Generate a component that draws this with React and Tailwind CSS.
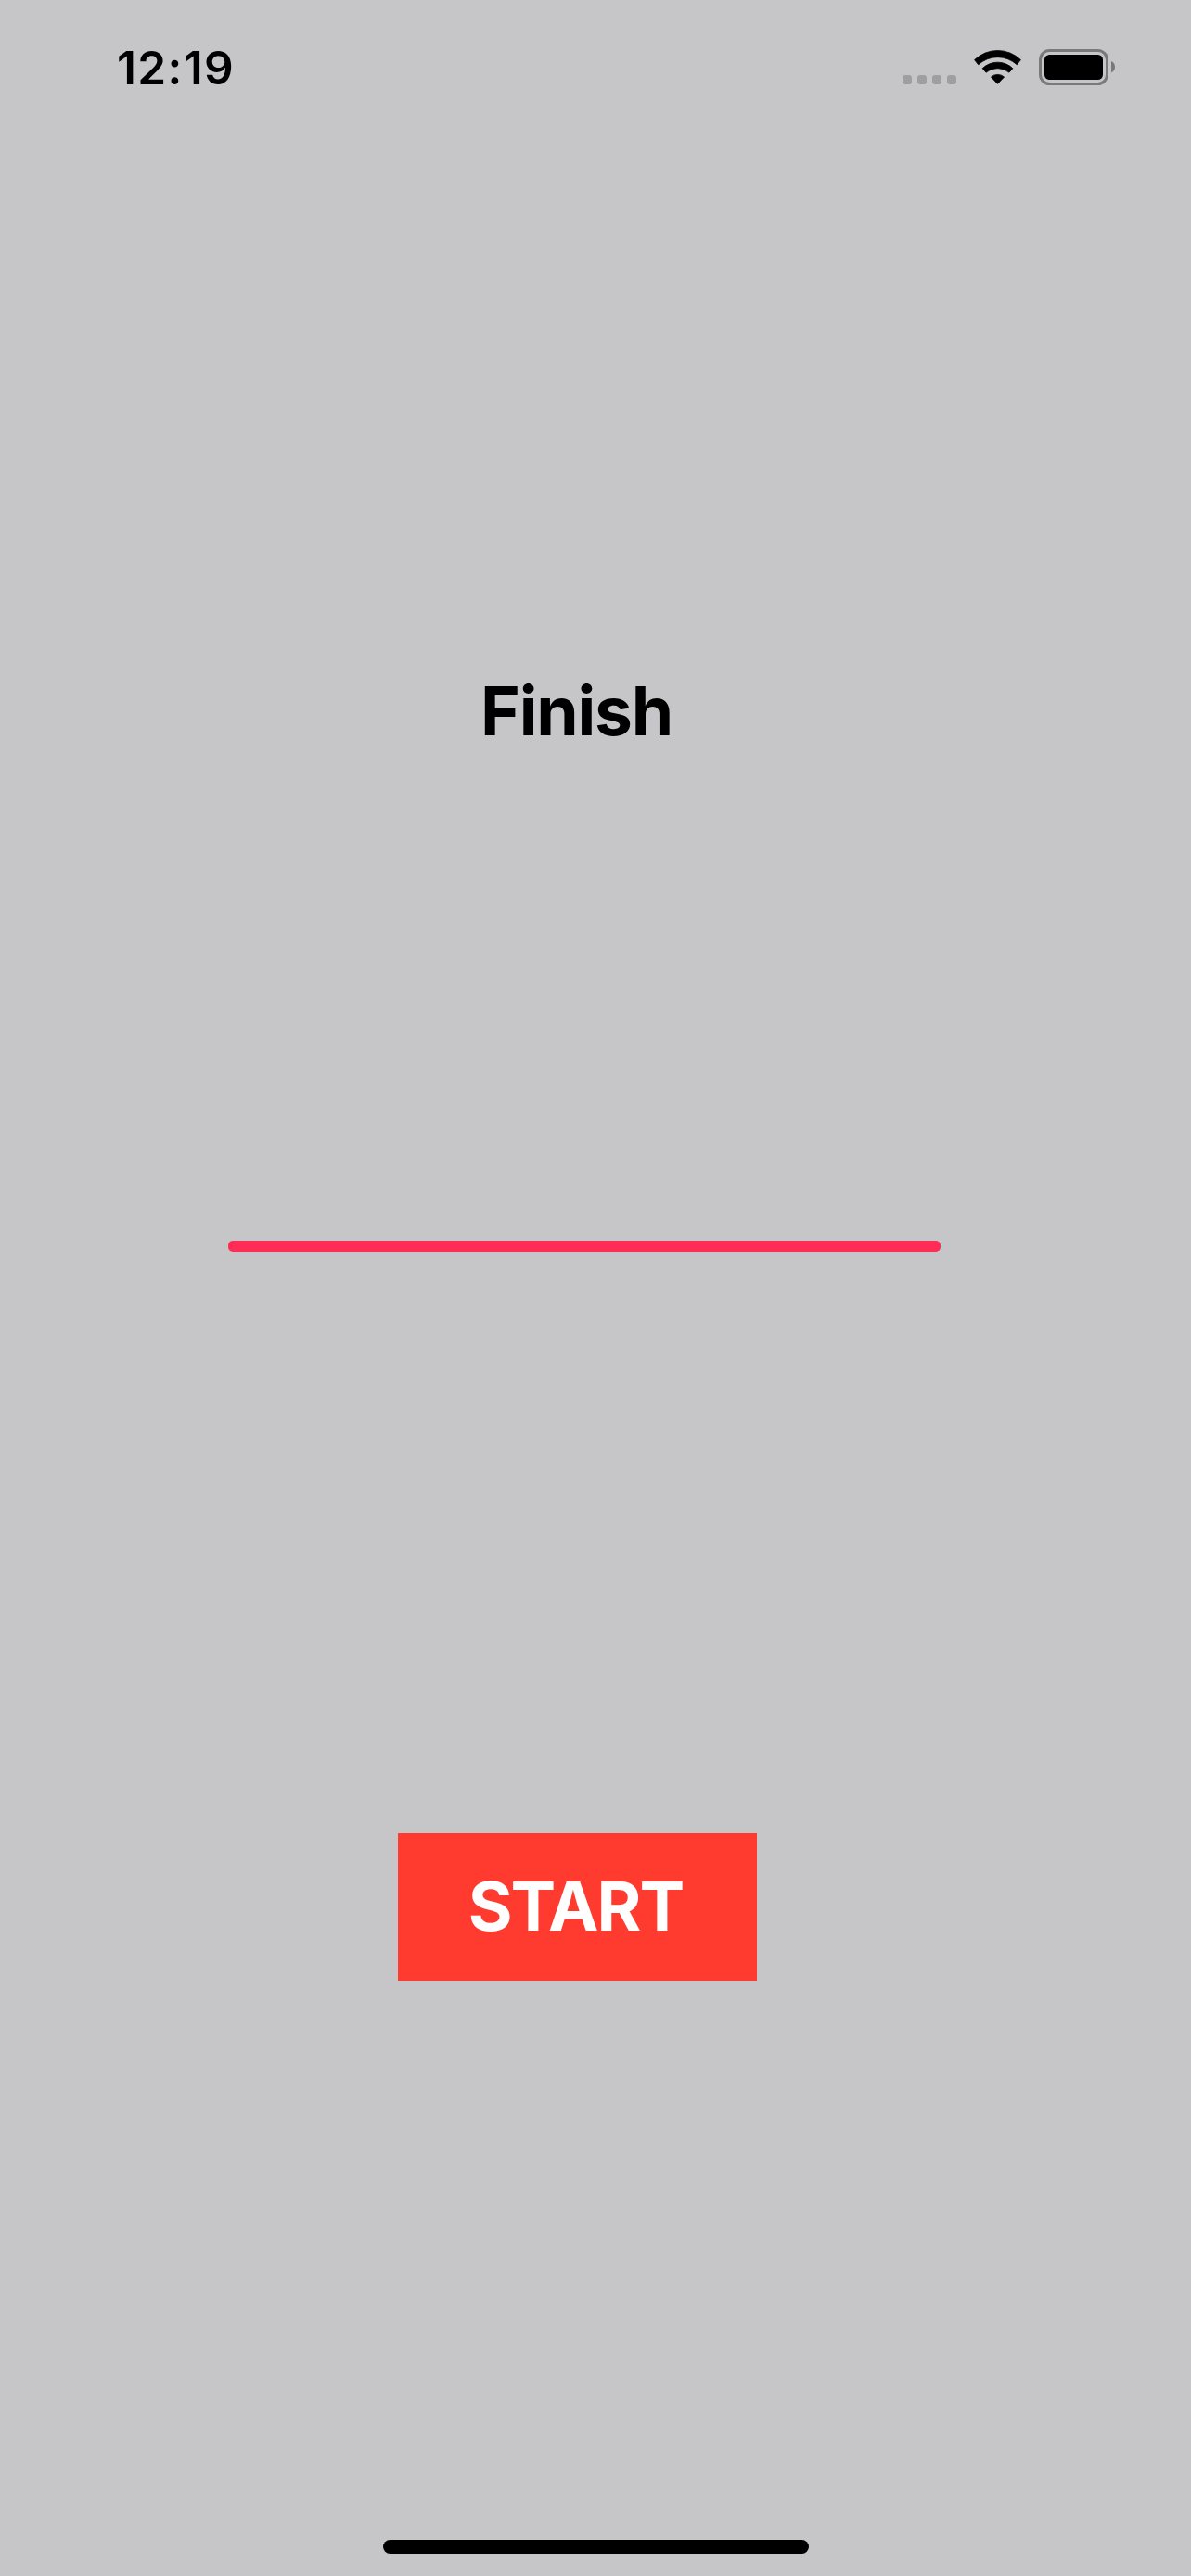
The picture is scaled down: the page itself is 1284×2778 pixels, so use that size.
function WifiIcon() {
  return (
    <svg className="ml-[19px] mt-[54px] h-[37px] w-[51px]" viewBox="0 0 51 37" fill="#000" stroke="#000" strokeWidth="0.8" strokeLinejoin="round">
      <path d="M0.6 10.6A35.7 35.7 0 0 1 50.4 10.6L46.3 15.8A30.7 30.7 0 0 0 4.7 15.8Z" />
      <path d="M9.2 19.7A23.6 23.6 0 0 1 41.8 19.7L38 24.2A19.5 19.5 0 0 0 13 24.2Z" />
      <path d="M18.4 29A11 11 0 0 1 32.6 29L25.5 36.4Z" />
    </svg>
  );
}

function BatteryIcon() {
  return (
    <svg className="ml-[19px] mt-[53px] h-[39px] w-[82px]" viewBox="0 0 82 39">
      <rect x="1.5" y="1.5" width="72" height="36" rx="10" fill="none" stroke="#79797a" strokeWidth="3" />
      <rect x="6" y="6" width="63" height="27" rx="5.5" fill="#000" />
      <path d="M78 13A6.8 6.8 0 0 1 78 25.4Z" fill="#79797a" />
    </svg>
  );
}

function StatusBar() {
  return (
    <header className="flex h-[146px] w-full items-start">
      <div className="ml-[126px] mt-[43px] w-[847px]">
        <span className="block whitespace-nowrap text-[49.5px] font-semibold leading-[60px] tracking-[1.4px]">12:19</span>
      </div>
      <div className="mt-[81px] flex gap-[6px]">
        <i className="size-[10px] rounded-[3px] bg-[#9f9fa1]" />
        <i className="size-[10px] rounded-[3px] bg-[#9f9fa1]" />
        <i className="size-[10px] rounded-[3px] bg-[#9f9fa1]" />
        <i className="size-[10px] rounded-[3px] bg-[#9f9fa1]" />
      </div>
      <WifiIcon />
      <BatteryIcon />
    </header>
  );
}

export default function App() {
  return (
    <div className="flex h-[2778px] w-[1284px] flex-col items-start overflow-hidden bg-[#c6c6c8] font-[Inter,sans-serif] text-black">
      <StatusBar />
      <h1 className="ml-[518px] mt-[576px] whitespace-nowrap text-[73px] font-bold leading-[90px] tracking-[-1.2px]">Finish</h1>
      <div className="ml-[246px] mt-[526px] h-[12px] w-[768px] rounded-[5px] bg-[#ff2d55]" />
      <button className="ml-[429px] mt-[627px] flex h-[159px] w-[387px] items-center justify-center bg-[#ff3b30] pb-[2px] pr-[4px] text-[73px] font-bold leading-[90px] tracking-[-1.9px] text-white">
        START
      </button>
      <div className="ml-[413px] mt-[603px] h-[15px] w-[459px] rounded-full bg-black" />
    </div>
  );
}
